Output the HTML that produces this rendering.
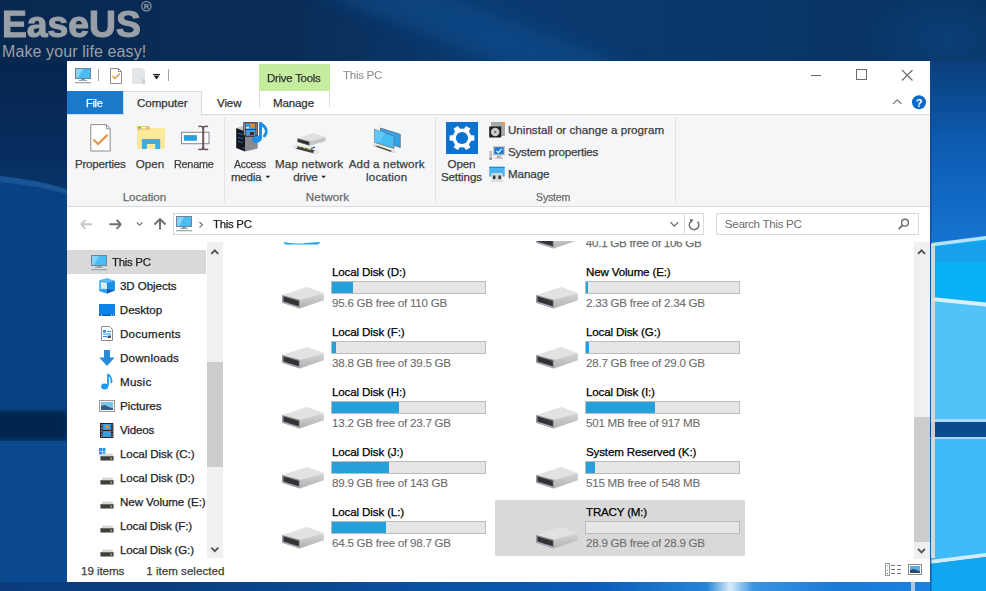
<!DOCTYPE html>
<html><head><meta charset="utf-8">
<style>
*{box-sizing:border-box}
html,body{margin:0;padding:0;width:986px;height:591px;overflow:hidden;background:#0a2f62;font-family:"Liberation Sans",sans-serif;}
.a{position:absolute}
#wall{position:absolute;left:0;top:0}
#win{position:absolute;left:67px;top:61px;width:863px;height:521px;background:#fff;overflow:hidden}
.t{position:absolute;font-size:12px;color:#1e1e1e;white-space:nowrap;line-height:14px;-webkit-text-stroke:0.25px currentColor}
.bar{position:absolute;width:155px;height:13px;border:1px solid #bcbcbc;background:#e6e6e6}
.bar i{position:absolute;left:0;top:0;height:11px;background:#26a0da}
</style></head><body>
<svg id="wall" width="986" height="591" viewBox="0 0 986 591">
  <defs>
    <linearGradient id="gtop" x1="0" y1="0" x2="1" y2="0">
      <stop offset="0" stop-color="#08284f"/><stop offset="0.3" stop-color="#0a2d58"/><stop offset="0.5" stop-color="#0b3b72"/><stop offset="0.8" stop-color="#0a3668"/><stop offset="1" stop-color="#09335f"/>
    </linearGradient>
    <linearGradient id="gright" x1="0" y1="0" x2="0" y2="1">
      <stop offset="0" stop-color="#0b3e7a"/><stop offset="0.06" stop-color="#0b4a90"/><stop offset="0.16" stop-color="#0d5cb2"/><stop offset="0.36" stop-color="#1776d4"/><stop offset="0.41" stop-color="#1a80dc"/>
    </linearGradient>
    <linearGradient id="gbot" x1="0" y1="0" x2="1" y2="0">
      <stop offset="0" stop-color="#0a3c7c"/><stop offset="0.2" stop-color="#0a4080"/><stop offset="0.64" stop-color="#0a5cb8"/><stop offset="0.76" stop-color="#2484d8"/><stop offset="0.785" stop-color="#d8ecfa"/><stop offset="0.81" stop-color="#3a94e2"/><stop offset="0.9" stop-color="#1a7ad8"/><stop offset="1" stop-color="#1a82e0"/>
    </linearGradient>
    <linearGradient id="gleft" x1="0" y1="0" x2="0" y2="1">
      <stop offset="0" stop-color="#062650"/><stop offset="0.7" stop-color="#072c5e"/><stop offset="1" stop-color="#083468"/>
    </linearGradient>
  </defs>
  <rect width="986" height="591" fill="#0a3f80"/>
  <rect x="0" y="0" width="986" height="70" fill="url(#gtop)"/>
  <filter id="bl2" x="-50%" y="-50%" width="200%" height="200%"><feGaussianBlur stdDeviation="2"/></filter>
  <filter id="bl" x="-50%" y="-50%" width="200%" height="200%"><feGaussianBlur stdDeviation="8"/></filter>
  <polygon points="310,-10 430,-10 640,70 520,70" fill="#0f4e8e" opacity="0.6" filter="url(#bl)"/>
  <radialGradient id="rtr" cx="0.5" cy="0.5" r="0.5"><stop offset="0" stop-color="#0c4a8e" stop-opacity="0.5"/><stop offset="1" stop-color="#0c4a8e" stop-opacity="0"/></radialGradient>
  <ellipse cx="950" cy="40" rx="90" ry="55" fill="url(#rtr)"/>
  <!-- left strip -->
  <rect x="0" y="62" width="67" height="350" fill="#0a4182"/>
  <path d="M0 62 H67 V190 Q35 180 0 177 Z" fill="url(#gleft)"/>
  <path d="M0 176 Q35 179 67 189 V194 Q35 185 0 182 Z" fill="#1d5c9c" opacity="0.75"/>
  <rect x="-10" y="411" width="77" height="29" fill="#052550" filter="url(#bl2)"/>
  <rect x="0" y="441" width="67" height="141" fill="#0b4a8e"/>
  <!-- right strip -->
  <rect x="930" y="61" width="56" height="530" fill="url(#gright)"/>
  <polygon points="931,244 986,237 986,305 931,299" fill="#0ab0f6"/>
  <polygon points="935,247 986,241 986,262 935,262" fill="#1a9cea" opacity="0.8"/>
  <polygon points="931,243 986,236 986,239.5 931,246.5" fill="#b8e2fa"/>
  <polygon points="931,299 986,303 986,422 931,422" fill="#52c2f8"/>
  <polygon points="931,297 986,302.5 986,306.5 931,301" fill="#d8f0fc"/>
  <rect x="930" y="419" width="56" height="3" fill="#a8d8f6"/>
  <rect x="930" y="422" width="56" height="15" fill="#0a4a90"/>
  <rect x="930" y="437" width="56" height="2" fill="#a8d8f6"/>
  <polygon points="930,439 986,439 986,555 930,562" fill="#3ebaf8"/>
  <polygon points="930,560 986,553 986,557 930,564" fill="#d0ecfb"/>
  <polygon points="930,564 986,557 986,591 930,591" fill="#12a6f0"/>
  <rect x="930" y="61" width="1.5" height="530" fill="#0a4a98" opacity="0.8"/>
  <rect x="931" y="244" width="4" height="314" fill="#d4dde6" opacity="0.92"/>
  <!-- bottom strip -->
  <rect x="0" y="582" width="930" height="9" fill="url(#gbot)"/>
  <rect x="911" y="582" width="4" height="9" fill="#d0dce8" opacity="0.8"/>
</svg>
<svg width="0" height="0" style="position:absolute">
 <defs>
  <g id="drv">
    <linearGradient id="drvside" x1="0" y1="0" x2="0" y2="1"><stop offset="0" stop-color="#d6d6d6"/><stop offset="1" stop-color="#b2b2b2"/></linearGradient>
    <polygon points="4.1,12.9 28.9,5.1 45.9,10.9 21.8,17.8" fill="#e2e2e2"/>
    <polygon points="21.8,17.8 45.9,10.9 45.9,18.3 21.8,26.4" fill="url(#drvside)"/>
    <polygon points="4.1,12.9 21.8,17.8 21.8,26.4 4.1,20.8" fill="#8a8590"/>
    <polygon points="4.1,19.5 21.8,25 21.8,26.4 4.1,20.8" fill="#a8b0b8"/>
    <polygon points="5.6,14.6 20.8,18.9 20.8,24.2 5.6,19.5" fill="#333333"/>
  </g>
 </defs>
</svg>
<!-- EaseUS logo -->
<div class="a" style="left:1.5px;top:4.8px;font-size:36px;font-weight:bold;color:#9aa0a7;line-height:40px;-webkit-text-stroke:1.1px #9aa0a7;transform:scaleX(1.035);transform-origin:0 0">EaseUS</div>
<svg class="a" style="left:140px;top:0px" width="13" height="13" viewBox="0 0 13 13"><circle cx="6.4" cy="6.2" r="4.7" fill="none" stroke="#9aa0a7" stroke-width="1.1"/><text x="6.4" y="9" font-family="Liberation Sans" font-size="7.5" font-weight="bold" fill="#9aa0a7" text-anchor="middle">R</text></svg>
<div class="a" style="left:2px;top:43px;font-size:16px;color:#9aa0a7;line-height:18px;letter-spacing:0.1px">Make your life easy!</div>

<div id="win">
<!-- ribbon body -->
<div class="a" style="left:0;top:53px;width:864px;height:93px;background:#f5f6f7;border-top:1px solid #dadbdc;border-bottom:1px solid #dadbdc"></div>
<!-- tabs -->
<div class="a" style="left:0;top:30px;width:56px;height:23px;background:#1979ca"></div>
<div class="a" style="left:56px;top:30px;width:79px;height:25px;background:#f5f6f7;border:1px solid #dadbdc;border-bottom:none"></div>
<div class="a" style="left:192px;top:30px;width:1px;height:16px;background:#dadbdc"></div>
<div class="a" style="left:262px;top:30px;width:1px;height:16px;background:#dadbdc"></div>
<!-- Drive Tools contextual -->
<div class="a" style="left:192px;top:3px;width:71px;height:27px;background:#c5eda0"></div>
<!-- group separators -->
<div class="a" style="left:157px;top:56px;width:1px;height:85px;background:#e2e3e4"></div>
<div class="a" style="left:368px;top:56px;width:1px;height:85px;background:#e2e3e4"></div>
<div class="a" style="left:608px;top:56px;width:1px;height:85px;background:#e2e3e4"></div>
<!-- address box -->
<div class="a" style="left:106px;top:152px;width:531px;height:22px;border:1px solid #d9d9d9"></div>
<div class="a" style="left:617px;top:152px;width:1px;height:22px;background:#d9d9d9"></div>
<div class="a" style="left:649px;top:152px;width:203px;height:22px;border:1px solid #d9d9d9"></div>
<!-- nav selection -->
<div class="a" style="left:0;top:189px;width:139px;height:24px;background:#d9d9d9"></div>
<!-- nav scrollbar -->
<div class="a" style="left:140px;top:181px;width:16px;height:316px;background:#f0f0f0"></div>
<div class="a" style="left:140px;top:301px;width:16px;height:105px;background:#cdcdcd"></div>
<!-- content scrollbar -->
<div class="a" style="left:847px;top:181px;width:16px;height:317px;background:#f0f0f0"></div>
<div class="a" style="left:847px;top:356px;width:16px;height:125px;background:#cdcdcd"></div>
<!-- selected tile -->
<div class="a" style="left:428px;top:439px;width:250px;height:56px;background:#d9d9d9"></div>

<div class="bar" style="left:264px;top:220px"><i style="width:21px"></i></div>
<svg class="a" style="left:211px;top:221px" width="50" height="30"><use href="#drv"/></svg>
<div class="bar" style="left:518px;top:220px"><i style="width:2px"></i></div>
<svg class="a" style="left:465px;top:221px" width="50" height="30"><use href="#drv"/></svg>
<div class="bar" style="left:264px;top:280px"><i style="width:4px"></i></div>
<svg class="a" style="left:211px;top:281px" width="50" height="30"><use href="#drv"/></svg>
<div class="bar" style="left:518px;top:280px"><i style="width:3px"></i></div>
<svg class="a" style="left:465px;top:281px" width="50" height="30"><use href="#drv"/></svg>
<div class="bar" style="left:264px;top:340px"><i style="width:67px"></i></div>
<svg class="a" style="left:211px;top:341px" width="50" height="30"><use href="#drv"/></svg>
<div class="bar" style="left:518px;top:340px"><i style="width:69px"></i></div>
<svg class="a" style="left:465px;top:341px" width="50" height="30"><use href="#drv"/></svg>
<div class="bar" style="left:264px;top:400px"><i style="width:57px"></i></div>
<svg class="a" style="left:211px;top:401px" width="50" height="30"><use href="#drv"/></svg>
<div class="bar" style="left:518px;top:400px"><i style="width:9px"></i></div>
<svg class="a" style="left:465px;top:401px" width="50" height="30"><use href="#drv"/></svg>
<div class="bar" style="left:264px;top:460px"><i style="width:54px"></i></div>
<svg class="a" style="left:211px;top:461px" width="50" height="30"><use href="#drv"/></svg>
<div class="bar" style="left:518px;top:460px"><i style="width:0px"></i></div>
<svg class="a" style="left:465px;top:461px" width="50" height="30"><use href="#drv"/></svg>
<svg class="a" style="left:0;top:0" width="864" height="521" viewBox="67 61 864 521">
<defs>
  <g id="pcmon">
    <rect x="0.5" y="0.5" width="15" height="10" fill="#4cbcf5" stroke="#6d8496" stroke-width="1"/>
    <polygon points="1,1 8,1 3,10 1,10" fill="#86d3f8"/>
    <rect x="6" y="11" width="4" height="1" fill="#8a97a2"/>
    <rect x="4" y="12" width="8" height="1" fill="#9aa6b0"/>
    <rect x="0" y="14" width="16" height="1.3" fill="#a0a8af"/>
  </g>
  <g id="ndrv">
    <polygon points="1.5,3 3,0.5 12,0.5 13.5,3" fill="#d6d6d6"/>
    <rect x="0.5" y="3" width="13" height="4.5" fill="#3c3c3c"/>
    <rect x="0.5" y="3" width="13" height="1" fill="#6a6a6a"/>
    <rect x="10.5" y="4.8" width="1.5" height="1.5" fill="#9be03a"/>
  </g>
  <clipPath id="cclip"><rect x="223" y="241" width="691" height="320"/></clipPath>
</defs>

<!-- title bar quick access -->
<use href="#pcmon" x="75" y="68"/>
<rect x="98" y="69" width="1" height="12" fill="#a4a4a4"/>
<path d="M110.5 68.5 H118.5 L121.5 71.5 V83.5 H110.5 Z" fill="#fff" stroke="#938a96" stroke-width="1"/>
<path d="M118.5 68.5 V71.5 H121.5" fill="none" stroke="#938a96" stroke-width="1"/>
<path d="M112.5 76 L115 78.5 L120 73.5" fill="none" stroke="#e59548" stroke-width="1.5"/>
<path d="M132 68 H142 L145 71 V84 H132 Z" fill="#e3e6e8"/>
<rect x="142" y="79" width="3" height="5" fill="#cfd3d6"/>
<rect x="153" y="74" width="7" height="1" fill="#222"/>
<polygon points="153.5,75.5 159.5,75.5 156.5,79.5" fill="#222"/>
<rect x="168" y="69" width="1" height="12" fill="#a4a4a4"/>

<!-- window controls -->
<rect x="811" y="75" width="10" height="1" fill="#6a6a6a"/>
<rect x="856.5" y="69.5" width="10" height="10" fill="none" stroke="#6a6a6a" stroke-width="1"/>
<path d="M902 70 L912.5 80.5 M912.5 70 L902 80.5" stroke="#6a6a6a" stroke-width="1.1"/>
<path d="M893 104 L897.2 99.8 L901.4 104" fill="none" stroke="#7a7a7a" stroke-width="1.1"/>
<circle cx="919" cy="102.3" r="7" fill="#0a6ac6"/>
<text x="919" y="106.6" font-family="Liberation Sans" font-weight="bold" font-size="11" fill="#fff" text-anchor="middle">?</text>

<!-- Properties -->
<path d="M90.8 124.6 H106.4 L110.2 128.4 V151 H90.8 Z" fill="#fff" stroke="#8e8a93" stroke-width="1"/>
<path d="M106.4 124.6 V128.9 H110.2" fill="none" stroke="#8e8a93" stroke-width="1"/>
<path d="M93.4 139.5 L98.1 144 L107.6 134.8" fill="none" stroke="#e8954a" stroke-width="2.3"/>

<!-- Open -->
<rect x="137" y="128" width="28" height="20.7" rx="1" fill="#fde99a"/>
<path d="M137 128 V126 Q137 125.9 138 125.9 H148.5 L150 127.5 V129.8 H137 Z" fill="#e9c271"/>
<rect x="139" y="127" width="6.5" height="1.4" fill="#fff"/>
<rect x="139" y="127" width="2" height="1.4" fill="#2a9ae8"/>
<path d="M141.9 149 V138.9 H160.2 V149 H155.2 V144 H146.9 V149 Z" fill="#35aff0"/>

<!-- Rename -->
<rect x="181.5" y="132.3" width="27.5" height="11.4" fill="#fff" stroke="#8a8290" stroke-width="1"/>
<rect x="183.9" y="135.1" width="13" height="5.7" fill="#2a9fe0"/>
<rect x="202.2" y="126" width="2" height="24" fill="#6e5560"/>
<path d="M198.3 126.5 Q203.2 125.5 203.2 129 Q203.2 125.5 208.1 126.5" fill="none" stroke="#6e5560" stroke-width="1.6"/>
<path d="M198.3 149.3 Q203.2 150.3 203.2 146.8 Q203.2 150.3 208.1 149.3" fill="none" stroke="#6e5560" stroke-width="1.6"/>

<!-- Access media -->
<polygon points="236,128 244.5,125.5 258,130 245,134" fill="#c9c9c9"/>
<polygon points="236.2,128 245,131.5 245,151.5 236.2,148" fill="#14161c"/>
<polygon points="245,131.5 257.7,128 257.7,148.5 245,151.5" fill="#8c8890"/>
<polygon points="238,133 243,134.2 243,135 238,133.8" fill="#2a90e8"/>
<polygon points="238,137 243,138.2 243,139 238,137.8" fill="#2a90e8"/>
<polygon points="238,141 243,142.2 243,143 238,141.8" fill="#2a90e8"/>
<circle cx="243.5" cy="148" r="0.8" fill="#2a90e8"/>
<rect x="243.3" y="122.2" width="14.6" height="14.6" fill="#3a2830"/>
<rect x="245.6" y="123.2" width="10" height="6" fill="#3a9ee0"/>
<rect x="245.6" y="130" width="10" height="5.8" fill="#3a9ee0"/>
<rect x="250.5" y="124" width="4" height="3.5" fill="#e09030"/>
<rect x="246" y="127" width="3" height="1.5" fill="#f0f0f0"/>
<rect x="250" y="132" width="4" height="3" fill="#3a2830"/>
<g fill="#fff"><rect x="244" y="123.5" width="1" height="1"/><rect x="244" y="125.5" width="1" height="1"/><rect x="244" y="127.5" width="1" height="1"/><rect x="244" y="129.5" width="1" height="1"/><rect x="244" y="131.5" width="1" height="1"/><rect x="244" y="133.5" width="1" height="1"/>
<rect x="256.3" y="123.5" width="1" height="1"/><rect x="256.3" y="125.5" width="1" height="1"/><rect x="256.3" y="127.5" width="1" height="1"/><rect x="256.3" y="129.5" width="1" height="1"/><rect x="256.3" y="131.5" width="1" height="1"/><rect x="256.3" y="133.5" width="1" height="1"/></g>
<rect x="259" y="122.2" width="3" height="17" rx="1" fill="#1a8fe8"/>
<path d="M260.5 123.5 Q266.8 127.5 266.3 132 Q265.8 134.5 264.3 136" fill="none" stroke="#1a8fe8" stroke-width="2.8" stroke-linecap="round"/>
<ellipse cx="257" cy="139.2" rx="4.8" ry="3.6" transform="rotate(-18 257 139.2)" fill="#1a8fe8"/>
<polygon points="265.5,175.8 270.2,175.8 267.85,178.3" fill="#222"/>
<polygon points="321.3,175.8 326,175.8 323.65,178.3" fill="#222"/>
<!-- Map network drive -->
<g transform="translate(290,126)">
<polygon points="7.3,12.2 23,7 35.5,11 19.5,15.5" fill="#e0e0e0"/>
<polygon points="19.5,15.5 35.5,11 35.5,15.2 19.5,19.8" fill="#c6c6c6"/>
<polygon points="7.3,12.2 19.5,15.5 19.5,19.8 7.3,16" fill="#6a5a64"/>
<polygon points="8.2,13.3 18.8,16.2 18.8,18.8 8.2,15.4" fill="#2e2e2e"/>
<polygon points="5,19.2 26,24.6 26,28 5,22.4" fill="#4a3a44"/>
<path d="M8.5 20.2 L11.5 21 M13 21.4 L16 22.2 M17.5 22.6 L20.5 23.4" stroke="#b0e868" stroke-width="1.2"/>
<path d="M21 22.3 L25 21.2" stroke="#2a5ea8" stroke-width="1.3"/>
<ellipse cx="5" cy="20.8" rx="2.6" ry="2.1" fill="#e8e8e8"/>
<ellipse cx="26" cy="26.2" rx="2.6" ry="2.1" fill="#e8e8e8"/>
</g>
<!-- Add network location -->
<polygon points="380.5,128 400.3,134.3 400.3,147.5 380.5,141" fill="#2fa4e8" stroke="#6a7480" stroke-width="0.8"/>
<polygon points="374.5,129.3 394,136.2 394,148.5 374.5,142.5" fill="#47bdf5" stroke="#6a7480" stroke-width="0.8"/>
<polygon points="374.5,129.3 385,133 380,142 374.5,142.5" fill="#62c8f7"/>
<polygon points="374,144.5 394,151.5 394,153 374,146" fill="#4a3a40"/>
<ellipse cx="375" cy="145" rx="2.2" ry="1.6" fill="#e0e0e0"/>
<ellipse cx="393.5" cy="151.5" rx="2.2" ry="1.6" fill="#e0e0e0"/>
<path d="M378 145.5 L389 149.5" stroke="#a8e060" stroke-width="0.9" stroke-dasharray="2.5 1"/>

<!-- Settings gear -->
<rect x="446" y="122" width="32" height="32" fill="#0a72d0"/>
<g transform="translate(462,138)" fill="#fff">
  <circle r="9.4"/>
  <polygon points="-2.9,-7.5 -2.5,-12.4 2.5,-12.4 2.9,-7.5" transform="rotate(30)"/>
  <polygon points="-2.9,-7.5 -2.5,-12.4 2.5,-12.4 2.9,-7.5" transform="rotate(90)"/>
  <polygon points="-2.9,-7.5 -2.5,-12.4 2.5,-12.4 2.9,-7.5" transform="rotate(150)"/>
  <polygon points="-2.9,-7.5 -2.5,-12.4 2.5,-12.4 2.9,-7.5" transform="rotate(210)"/>
  <polygon points="-2.9,-7.5 -2.5,-12.4 2.5,-12.4 2.9,-7.5" transform="rotate(270)"/>
  <polygon points="-2.9,-7.5 -2.5,-12.4 2.5,-12.4 2.9,-7.5" transform="rotate(330)"/>
  <circle r="6.1" fill="#0a72d0"/>
</g>

<!-- Uninstall -->
<rect x="491" y="122" width="14" height="14" fill="#a8a8a8"/>
<polygon points="501,122 505,122 505,126" fill="#f0a040"/>
<rect x="489.2" y="126.5" width="12" height="11" fill="#1e1e1e"/>
<circle cx="495.2" cy="132" r="4.3" fill="#c8c8c8"/>
<circle cx="495.2" cy="132" r="1" fill="#6e5560"/>
<!-- System properties -->
<rect x="493" y="146" width="12" height="9.5" fill="#c8c8c8"/>
<rect x="494.3" y="147.2" width="9.4" height="7" fill="#1a7ad8"/>
<path d="M496.5 150.8 L498.3 152.6 L501.8 148.8" fill="none" stroke="#fff" stroke-width="1.2"/>
<rect x="497" y="155.5" width="4" height="2" fill="#b0b0b0"/>
<rect x="495" y="157.5" width="8" height="1.2" fill="#b0b0b0"/>
<rect x="489.3" y="151" width="2.8" height="8.4" fill="#c0c0c0"/>
<rect x="489.3" y="158.5" width="2.8" height="1" fill="#6e5560"/>
<!-- Manage -->
<rect x="489.2" y="166.8" width="15.5" height="9.7" fill="#4ab4f4"/>
<rect x="489.2" y="166.8" width="15.5" height="1" fill="#2a7ac8"/>
<rect x="491.5" y="173" width="11" height="8.7" fill="#d8d8d8"/>
<rect x="493" y="175.5" width="2.4" height="3.5" fill="#333"/>
<rect x="498.5" y="175.5" width="2.4" height="3.5" fill="#333"/>

<!-- address bar -->
<path d="M81 224.3 H92 M81 224.3 L85.5 219.8 M81 224.3 L85.5 228.8" fill="none" stroke="#c8c8c8" stroke-width="1.9"/>
<path d="M109.5 224.3 H121 M121 224.3 L116.5 219.8 M121 224.3 L116.5 228.8" fill="none" stroke="#6d6d6d" stroke-width="1.9"/>
<path d="M136.8 222.5 L139.6 225.3 L142.4 222.5" fill="none" stroke="#6d6d6d" stroke-width="1.1"/>
<path d="M160 229.5 V219 M154.5 224.5 L160 219 L165.5 224.5" fill="none" stroke="#6d6d6d" stroke-width="1.9"/>
<use href="#pcmon" x="176" y="216"/>
<path d="M199.5 222 L202.5 224.8 L199.5 227.6" fill="none" stroke="#6d6d6d" stroke-width="1.1"/>
<path d="M670.5 222.3 L674.3 226.1 L678.1 222.3" fill="none" stroke="#6d6d6d" stroke-width="1.3"/>
<path d="M697.5 221.5 A4.8 4.8 0 1 1 691 221.2" fill="none" stroke="#6d6d6d" stroke-width="1.4"/>
<polygon points="689.8,218.8 693.5,219.8 690.8,223.2" fill="#6d6d6d"/>
<circle cx="905" cy="222.7" r="3.4" fill="none" stroke="#6d6d6d" stroke-width="1.4"/>
<path d="M902.6 225.2 L898.8 229" stroke="#6d6d6d" stroke-width="1.8"/>

<!-- nav scroll arrows -->
<path d="M211.3 253.8 L214.8 250.3 L218.3 253.8" fill="none" stroke="#5a4e56" stroke-width="1.9"/>
<path d="M211.3 547.6 L214.8 551.1 L218.3 547.6" fill="none" stroke="#5a4e56" stroke-width="1.9"/>
<path d="M918 253.8 L921.5 250.3 L925 253.8" fill="none" stroke="#5a4e56" stroke-width="1.9"/>
<path d="M918 548.8 L921.5 552.3 L925 548.8" fill="none" stroke="#5a4e56" stroke-width="1.9"/>

<!-- nav icons -->
<use href="#pcmon" x="91" y="255"/>
<!-- 3D objects -->
<g transform="translate(97,276)">
<polygon points="10,2.2 17.8,5 17.8,14.5 10,17.5 2.2,15 2.2,4.5" fill="#3aa8f0"/>
<polygon points="2.2,4.5 10,2.2 17.8,5 10,7" fill="#5ab8f3"/>
<polygon points="3.8,6 10,7 10,13 3.8,12.8" fill="#d6effb"/>
<polygon points="10,7 17.8,5 17.8,14.5 10,13" fill="#1a8ee6"/>
<polygon points="10,13 17.8,14.5 10,17.5" fill="#0a5aa8"/>
<polygon points="2.2,15 10,13 10,17.5" fill="#2e9ef0"/>
</g>
<!-- desktop -->
<rect x="99" y="304" width="16" height="12" fill="#0a84e8"/>
<rect x="99" y="314.5" width="16" height="1.5" fill="#0862c0"/>
<rect x="101" y="314.6" width="1" height="1" fill="#fff"/>
<rect x="111" y="314.6" width="1" height="1" fill="#fff"/>
<rect x="113" y="314.6" width="1" height="1" fill="#fff"/>
<!-- documents -->
<path d="M101.5 326.5 H109.5 L112.5 329.5 V340.5 H101.5 Z" fill="#fff" stroke="#8e8a93" stroke-width="1"/>
<rect x="103" y="330" width="3" height="2.5" fill="#2a90e0"/>
<rect x="107" y="331" width="4" height="1" fill="#2a90e0"/>
<rect x="103" y="333.5" width="8" height="1" fill="#2a90e0"/>
<rect x="103" y="336" width="4" height="1" fill="#2a90e0"/>
<rect x="107.5" y="335.5" width="3.5" height="2.5" fill="#555"/>
<!-- downloads -->
<polygon points="104,350 110,350 110,357.5 114.7,357.5 107,366 99.3,357.5 104,357.5" fill="#2a8ad8"/>
<!-- music -->
<path d="M108 374 V386" stroke="#1c9af0" stroke-width="1.8"/>
<path d="M108 374.2 Q111.8 377.5 111.5 382 L110.8 383" fill="none" stroke="#1c9af0" stroke-width="1.6"/>
<ellipse cx="104.6" cy="386.6" rx="3.5" ry="3" fill="#1c9af0"/>
<!-- pictures -->
<rect x="99.5" y="400.5" width="15" height="11" fill="#f4f4f4" stroke="#9a9a9a" stroke-width="1"/>
<rect x="101" y="402" width="12" height="8" fill="#7cc4f0"/>
<polygon points="101,406 105,405 110,407.5 113,408 113,410 101,410" fill="#3a5e80"/>
<!-- videos -->
<rect x="100" y="423" width="13.4" height="15" fill="#2a2024"/>
<rect x="102.5" y="424" width="8.4" height="6" fill="#3a9ee0"/>
<rect x="102.5" y="431" width="8.4" height="6" fill="#3a9ee0"/>
<rect x="105" y="425" width="4" height="3" fill="#e09030"/>
<rect x="101" y="424.5" width="0.8" height="1" fill="#fff"/><rect x="101" y="427.5" width="0.8" height="1" fill="#fff"/><rect x="101" y="430.5" width="0.8" height="1" fill="#fff"/><rect x="101" y="433.5" width="0.8" height="1" fill="#fff"/><rect x="101" y="436" width="0.8" height="1" fill="#fff"/>
<rect x="111.6" y="424.5" width="0.8" height="1" fill="#fff"/><rect x="111.6" y="427.5" width="0.8" height="1" fill="#fff"/><rect x="111.6" y="430.5" width="0.8" height="1" fill="#fff"/><rect x="111.6" y="433.5" width="0.8" height="1" fill="#fff"/><rect x="111.6" y="436" width="0.8" height="1" fill="#fff"/>
<!-- drives -->
<g fill="#1a9af0"><rect x="99" y="448" width="3" height="3"/><rect x="102.5" y="448" width="3" height="3"/><rect x="99" y="451.5" width="3" height="3"/><rect x="102.5" y="451.5" width="3" height="3"/></g>
<use href="#ndrv" x="100" y="453"/>
<use href="#ndrv" x="100" y="477"/>
<use href="#ndrv" x="100" y="501"/>
<use href="#ndrv" x="100" y="525"/>
<use href="#ndrv" x="100" y="549"/>

<!-- partial row -->
<g clip-path="url(#cclip)">
  <path d="M283.5 242 Q300 244.5 305 243 L320.5 242 L318 244.5 H285 Z" fill="#1ea4f0"/>
  <use href="#drv" x="532" y="222"/>
</g>

<!-- status view icons -->
<rect x="885.5" y="563.5" width="4" height="12" fill="#fff" stroke="#9a9a9a" stroke-width="1"/>
<rect x="887" y="565.5" width="1" height="1" fill="#3a9ee0"/>
<rect x="887" y="569.5" width="1" height="1" fill="#3a9ee0"/>
<rect x="887" y="573" width="1" height="1" fill="#a04040"/>
<g fill="#7a7a7a"><rect x="891" y="565" width="4" height="1"/><rect x="897" y="565" width="4" height="1"/><rect x="891" y="569" width="4" height="1"/><rect x="897" y="569" width="4" height="1"/><rect x="891" y="573" width="4" height="1"/><rect x="897" y="573" width="4" height="1"/></g>
<rect x="908.5" y="564.5" width="13" height="10" fill="#fff" stroke="#8a8a8a" stroke-width="1"/>
<rect x="910" y="566" width="10" height="7" fill="#5ab0e8"/>
<polygon points="910,570 914,569 920,571.5 920,573 910,573" fill="#2a4a6a"/>
</svg>

<div class="t" style="left:200.00px;top:9.98px;color:#333;font-size:11.6px;letter-spacing:-0.300px;transform:scaleX(0.9956);transform-origin:0 0;">Drive Tools</div>
<div class="t" style="left:275.50px;top:7.28px;color:#8a8a8a;font-size:11.6px;letter-spacing:-0.300px;transform:scaleX(0.9993);transform-origin:0 0;-webkit-text-stroke:0;">This PC</div>
<div class="t" style="left:19.30px;top:34.58px;color:#ffffff;font-size:11.6px;letter-spacing:-0.300px;transform:scaleX(0.9448);transform-origin:0 0;">File</div>
<div class="t" style="left:69.90px;top:34.58px;color:#333;font-size:11.6px;letter-spacing:-0.043px;">Computer</div>
<div class="t" style="left:150.00px;top:34.58px;color:#333;font-size:11.6px;letter-spacing:-0.140px;">View</div>
<div class="t" style="left:206.00px;top:34.58px;color:#333;font-size:11.6px;letter-spacing:-0.159px;">Manage</div>
<div class="t" style="left:7.90px;top:95.98px;color:#3c3c3c;font-size:11.6px;letter-spacing:-0.204px;">Properties</div>
<div class="t" style="left:68.80px;top:95.98px;color:#3c3c3c;font-size:11.6px;letter-spacing:-0.021px;">Open</div>
<div class="t" style="left:107.00px;top:95.98px;color:#3c3c3c;font-size:11.6px;letter-spacing:-0.300px;transform:scaleX(0.9404);transform-origin:0 0;">Rename</div>
<div class="t" style="left:55.70px;top:128.98px;color:#6b6b6b;font-size:11.6px;letter-spacing:-0.048px;">Location</div>
<div class="t" style="left:166.80px;top:95.78px;color:#3c3c3c;font-size:11.6px;letter-spacing:-0.300px;transform:scaleX(0.9005);transform-origin:0 0;">Access</div>
<div class="t" style="left:163.90px;top:108.68px;color:#3c3c3c;font-size:11.6px;letter-spacing:-0.269px;">media</div>
<div class="t" style="left:208.00px;top:95.78px;color:#3c3c3c;font-size:11.6px;letter-spacing:0.173px;">Map network</div>
<div class="t" style="left:226.30px;top:108.68px;color:#3c3c3c;font-size:11.6px;letter-spacing:-0.157px;">drive</div>
<div class="t" style="left:281.70px;top:95.78px;color:#3c3c3c;font-size:11.6px;letter-spacing:0.141px;">Add a network</div>
<div class="t" style="left:299.10px;top:108.68px;color:#3c3c3c;font-size:11.6px;letter-spacing:0.148px;">location</div>
<div class="t" style="left:238.80px;top:128.98px;color:#6b6b6b;font-size:11.6px;letter-spacing:0.130px;">Network</div>
<div class="t" style="left:380.50px;top:95.78px;color:#3c3c3c;font-size:11.6px;letter-spacing:-0.121px;">Open</div>
<div class="t" style="left:373.90px;top:108.68px;color:#3c3c3c;font-size:11.6px;letter-spacing:-0.099px;">Settings</div>
<div class="t" style="left:440.90px;top:62.28px;color:#3c3c3c;font-size:11.6px;letter-spacing:0.032px;">Uninstall or change a program</div>
<div class="t" style="left:440.90px;top:84.18px;color:#3c3c3c;font-size:11.6px;letter-spacing:-0.183px;">System properties</div>
<div class="t" style="left:440.90px;top:105.88px;color:#3c3c3c;font-size:11.6px;letter-spacing:-0.059px;">Manage</div>
<div class="t" style="left:469.10px;top:128.98px;color:#6b6b6b;font-size:11.6px;letter-spacing:-0.300px;transform:scaleX(0.9259);transform-origin:0 0;">System</div>
<div class="t" style="left:146.20px;top:155.98px;color:#1e1e1e;font-size:11.6px;letter-spacing:-0.300px;transform:scaleX(0.9866);transform-origin:0 0;">This PC</div>
<div class="t" style="left:657.80px;top:156.38px;color:#6d6d6d;font-size:11.6px;letter-spacing:-0.299px;-webkit-text-stroke:0;">Search This PC</div>
<div class="t" style="left:45.00px;top:194.08px;color:#1e1e1e;font-size:11.6px;letter-spacing:-0.300px;transform:scaleX(0.9891);transform-origin:0 0;">This PC</div>
<div class="t" style="left:53.00px;top:218.08px;color:#1e1e1e;font-size:11.6px;letter-spacing:-0.083px;">3D Objects</div>
<div class="t" style="left:52.80px;top:242.08px;color:#1e1e1e;font-size:11.6px;letter-spacing:-0.039px;">Desktop</div>
<div class="t" style="left:53.00px;top:266.08px;color:#1e1e1e;font-size:11.6px;letter-spacing:0.245px;">Documents</div>
<div class="t" style="left:53.00px;top:290.08px;color:#1e1e1e;font-size:11.6px;letter-spacing:0.193px;">Downloads</div>
<div class="t" style="left:53.00px;top:314.08px;color:#1e1e1e;font-size:11.6px;letter-spacing:0.231px;">Music</div>
<div class="t" style="left:53.00px;top:338.08px;color:#1e1e1e;font-size:11.6px;letter-spacing:-0.054px;">Pictures</div>
<div class="t" style="left:53.00px;top:362.08px;color:#1e1e1e;font-size:11.6px;letter-spacing:-0.168px;">Videos</div>
<div class="t" style="left:53.00px;top:386.08px;color:#1e1e1e;font-size:11.6px;letter-spacing:-0.108px;">Local Disk (C:)</div>
<div class="t" style="left:53.00px;top:410.08px;color:#1e1e1e;font-size:11.6px;letter-spacing:-0.108px;">Local Disk (D:)</div>
<div class="t" style="left:53.00px;top:434.08px;color:#1e1e1e;font-size:11.6px;letter-spacing:-0.092px;">New Volume (E:)</div>
<div class="t" style="left:53.00px;top:458.08px;color:#1e1e1e;font-size:11.6px;letter-spacing:-0.188px;">Local Disk (F:)</div>
<div class="t" style="left:53.00px;top:482.08px;color:#1e1e1e;font-size:11.6px;letter-spacing:-0.190px;">Local Disk (G:)</div>
<div class="t" style="left:14.10px;top:502.98px;color:#3c3c3c;font-size:11.6px;letter-spacing:-0.088px;">19 items</div>
<div class="t" style="left:79.20px;top:502.98px;color:#3c3c3c;font-size:11.6px;letter-spacing:0.016px;">1 item selected</div>
<div class="t" style="left:265.00px;top:203.98px;color:#000;font-size:11.6px;letter-spacing:-0.147px;">Local Disk (D:)</div>
<div class="t" style="left:265.00px;top:234.78px;color:#6d6d6d;font-size:11.6px;letter-spacing:-0.244px;-webkit-text-stroke:0.1px currentColor;">95.6 GB free of 110 GB</div>
<div class="t" style="left:519.00px;top:203.98px;color:#000;font-size:11.6px;letter-spacing:-0.168px;">New Volume (E:)</div>
<div class="t" style="left:519.00px;top:234.78px;color:#6d6d6d;font-size:11.6px;letter-spacing:-0.241px;-webkit-text-stroke:0.1px currentColor;">2.33 GB free of 2.34 GB</div>
<div class="t" style="left:265.00px;top:263.98px;color:#000;font-size:11.6px;letter-spacing:-0.144px;">Local Disk (F:)</div>
<div class="t" style="left:265.00px;top:294.78px;color:#6d6d6d;font-size:11.6px;letter-spacing:-0.241px;-webkit-text-stroke:0.1px currentColor;">38.8 GB free of 39.5 GB</div>
<div class="t" style="left:519.00px;top:263.98px;color:#000;font-size:11.6px;letter-spacing:-0.148px;">Local Disk (G:)</div>
<div class="t" style="left:519.00px;top:294.78px;color:#6d6d6d;font-size:11.6px;letter-spacing:-0.241px;-webkit-text-stroke:0.1px currentColor;">28.7 GB free of 29.0 GB</div>
<div class="t" style="left:265.00px;top:323.98px;color:#000;font-size:11.6px;letter-spacing:-0.147px;">Local Disk (H:)</div>
<div class="t" style="left:265.00px;top:354.78px;color:#6d6d6d;font-size:11.6px;letter-spacing:-0.241px;-webkit-text-stroke:0.1px currentColor;">13.2 GB free of 23.7 GB</div>
<div class="t" style="left:519.00px;top:323.98px;color:#000;font-size:11.6px;letter-spacing:-0.137px;">Local Disk (I:)</div>
<div class="t" style="left:519.00px;top:354.78px;color:#6d6d6d;font-size:11.6px;letter-spacing:-0.254px;-webkit-text-stroke:0.1px currentColor;">501 MB free of 917 MB</div>
<div class="t" style="left:265.00px;top:383.98px;color:#000;font-size:11.6px;letter-spacing:-0.142px;">Local Disk (J:)</div>
<div class="t" style="left:265.00px;top:414.78px;color:#6d6d6d;font-size:11.6px;letter-spacing:-0.246px;-webkit-text-stroke:0.1px currentColor;">89.9 GB free of 143 GB</div>
<div class="t" style="left:519.00px;top:383.98px;color:#000;font-size:11.6px;letter-spacing:-0.162px;">System Reserved (K:)</div>
<div class="t" style="left:519.00px;top:414.78px;color:#6d6d6d;font-size:11.6px;letter-spacing:-0.254px;-webkit-text-stroke:0.1px currentColor;">515 MB free of 548 MB</div>
<div class="t" style="left:265.00px;top:443.98px;color:#000;font-size:11.6px;letter-spacing:-0.143px;">Local Disk (L:)</div>
<div class="t" style="left:265.00px;top:474.78px;color:#6d6d6d;font-size:11.6px;letter-spacing:-0.241px;-webkit-text-stroke:0.1px currentColor;">64.5 GB free of 98.7 GB</div>
<div class="t" style="left:519.00px;top:443.98px;color:#000;font-size:11.6px;letter-spacing:-0.190px;">TRACY (M:)</div>
<div class="t" style="left:519.00px;top:474.78px;color:#6d6d6d;font-size:11.6px;letter-spacing:-0.241px;-webkit-text-stroke:0.1px currentColor;">28.9 GB free of 28.9 GB</div>
<div class="t" style="left:518.80px;top:174.78px;color:#6d6d6d;font-size:11.6px;letter-spacing:-0.246px;clip-path:inset(5.22px 0 0 0)">40.1 GB free of 106 GB</div>
</div>
</body></html>
